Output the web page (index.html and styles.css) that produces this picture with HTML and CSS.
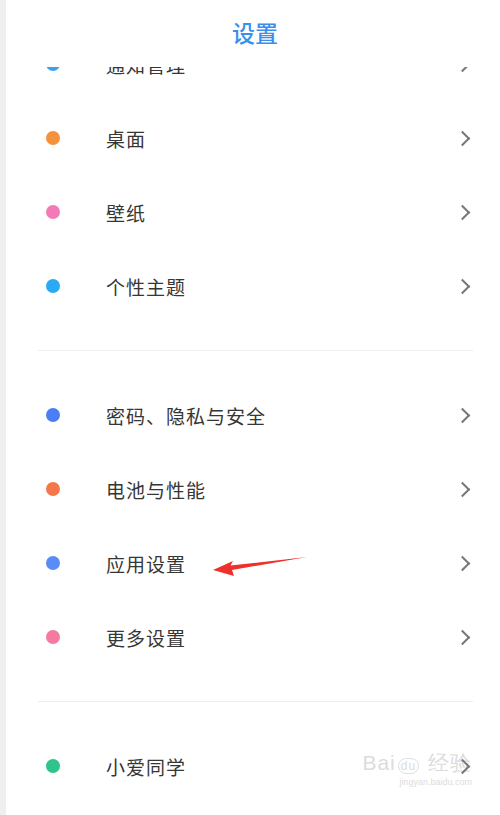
FILE: index.html
```html
<!DOCTYPE html>
<html>
  <head>
    <meta charset="utf-8">
    <link rel="stylesheet" href="styles.css">
  </head>
  <body>
    <div class="screen">
      <div class="header">设置</div>

      <div class="list">
        <div class="group first">
          <div class="item"><span class="dot" style="background:#3aa0f0"></span><span class="label">通知管理</span><span class="chev"></span></div>
          <div class="item"><span class="dot" style="background:#f5913a"></span><span class="label">桌面</span><span class="chev"></span></div>
          <div class="item"><span class="dot" style="background:#f27ab6"></span><span class="label">壁纸</span><span class="chev"></span></div>
          <div class="item"><span class="dot" style="background:#2aaaf5"></span><span class="label">个性主题</span><span class="chev"></span></div>
        </div>
        <div class="divider"></div>
        <div class="group">
          <div class="item"><span class="dot" style="background:#4a7ef5"></span><span class="label">密码、隐私与安全</span><span class="chev"></span></div>
          <div class="item"><span class="dot" style="background:#f5764a"></span><span class="label">电池与性能</span><span class="chev"></span></div>
          <div class="item arrow-row"><span class="dot" style="background:#5a8cf5"></span><span class="label">应用设置</span><span class="chev"></span>
            <svg class="arrow" width="100" height="24" viewBox="0 0 100 24">
              <path d="M2 16 L22 7 L19.5 11.5 L96 3 L21 16 L23 22 Z" fill="#f0302a"/>
            </svg>
          </div>
          <div class="item"><span class="dot" style="background:#f47aa0"></span><span class="label">更多设置</span><span class="chev"></span></div>
        </div>
        <div class="divider"></div>
        <div class="group">
          <div class="item"><span class="dot" style="background:#2ec48a"></span><span class="label">小爱同学</span><span class="chev"></span></div>
        </div>
      </div>

      <div class="watermark">
        <div class="wm-top">Bai<span class="paw">du</span> 经验</div>
        <div class="wm-url">jingyan.baidu.com</div>
      </div>
    </div>
  </body>
</html>
```

FILE: styles.css
```css
html, body {
  margin: 0;
  padding: 0;
  background: #fff;
}

body {
  font-family: "Noto Sans CJK SC", "Noto Sans", sans-serif;
  color: #333;
}

.screen {
  position: relative;
  width: 500px;
  height: 815px;
  overflow: hidden;
  border-left: 6px solid #efefef;
  box-sizing: border-box;
  background: #fff;
}

.header {
  position: relative;
  z-index: 2;
  height: 67px;
  background: #fff;
  text-align: center;
  font-size: 23px;
  font-weight: 500;
  line-height: 64px;
  color: #3a8ef0;
  padding-left: 4px;
}

.list {
  position: relative;
  z-index: 1;
  margin-top: -40px;
}

.item {
  position: relative;
  display: flex;
  align-items: center;
  height: 74px;
  padding: 0 28px 0 40px;
}

.dot {
  width: 14px;
  height: 14px;
  border-radius: 50%;
  flex: none;
}

.label {
  flex: 1;
  margin-left: 46px;
  font-size: 19px;
  color: #363636;
  letter-spacing: 1px;
}

.chev {
  width: 9px;
  height: 9px;
  border-top: 2px solid #777;
  border-right: 2px solid #777;
  transform: rotate(45deg);
  margin-right: 4px;
}

.divider {
  height: 1px;
  background: #eeeeee;
  margin: 27px 27px 27px 32px;
}

.arrow {
  position: absolute;
  left: 205px;
  top: 28px;
}

.watermark {
  position: absolute;
  right: 28px;
  bottom: 28px;
  color: #dcdcdc;
  text-align: right;
  font-family: "Liberation Sans", sans-serif;
}

.wm-top {
  font-size: 21px;
  letter-spacing: 1px;
}

.paw {
  font-size: 12px;
  border: 1px solid #e0e0e0;
  border-radius: 8px;
  padding: 0 2px;
  margin: 0 2px;
}

.wm-url {
  font-size: 9px;
}
```
